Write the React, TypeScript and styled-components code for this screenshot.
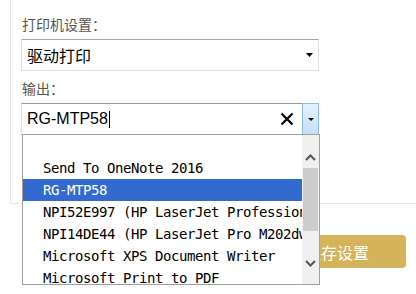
import React from 'react';
import styled, { createGlobalStyle } from 'styled-components';

const Global = createGlobalStyle`
  html, body { margin: 0; padding: 0; background: #fff; }
  body {
    width: 416px; height: 294px; overflow: hidden;
    font-family: "Noto Sans CJK SC", "Liberation Sans", sans-serif;
  }
`;

const Page = styled.div`
  display: flex;
  flex-direction: column;
  height: 294px;
`;

const Panel = styled.div`
  margin-left: 10px;
  height: 204px;
  box-sizing: border-box;
  border-left: 1px solid #e8e8e8;
  border-bottom: 1px solid #e8e8e8;
  padding: 14px 0 0 10px;
  display: flex;
  flex-direction: column;
`;

const Label = styled.div<{ $gap?: number }>`
  font-size: 14px;
  line-height: 20px;
  color: #555;
  padding-left: 1px;
  margin-top: ${(p) => p.$gap ?? 0}px;
  margin-bottom: 5px;
`;

const Select = styled.div`
  width: 298px;
  height: 32px;
  box-sizing: border-box;
  border: 1px solid #e0e0e0;
  border-top-color: #a8a8a8;
  display: flex;
  align-items: center;
  padding: 0 5px 0 5px;
  font-size: 16px;
  color: #000;
`;

const SelectText = styled.span`
  flex: 1;
`;

const Combo = styled.div`
  position: relative;
  width: 298px;
  height: 32px;
  box-sizing: border-box;
  border: 1px solid #e0e0e0;
  border-top-color: #9a9a9a;
  border-bottom-color: #9a9a9a;
  display: flex;
  align-items: center;
`;

const ComboText = styled.div`
  flex: 1;
  display: flex;
  align-items: center;
  padding-left: 5px;
  font-family: "Liberation Sans", Arial, sans-serif;
  font-size: 16px;
  color: #000;
`;

const Caret = styled.span`
  display: inline-block;
  width: 1px;
  height: 17px;
  background: #000;
  margin-left: 1px;
`;

const ClearIcon = styled.svg`
  width: 14px;
  height: 14px;
  margin-right: 8px;
`;

const DropBtn = styled.div`
  width: 17px;
  height: 32px;
  margin: -1px -1px -1px 0;
  box-sizing: border-box;
  border: 1px solid #8cbbe6;
  background: linear-gradient(#e6f2fc, #c3dff7);
  display: flex;
  align-items: center;
  justify-content: center;
`;

const Arrow = styled.svg`
  display: block;
`;

const List = styled.div`
  position: absolute;
  left: 0;
  top: 100%;
  width: 298px;
  height: 151px;
  box-sizing: border-box;
  border: 1px solid #a0a0a0;
  background: #fff;
  display: flex;
  z-index: 10;
`;

const Options = styled.div`
  flex: 1;
  overflow: hidden;
  display: flex;
  flex-direction: column;
`;

const Option = styled.div<{ $selected?: boolean }>`
  flex: none;
  height: 22px;
  line-height: 22px;
  padding-left: 20px;
  white-space: nowrap;
  font-family: "DejaVu Sans Mono", "Liberation Mono", monospace;
  font-size: 14px;
  letter-spacing: -0.43px;
  color: ${(p) => (p.$selected ? '#fff' : '#000')};
  background: ${(p) => (p.$selected ? '#336ad0' : 'transparent')};
`;

const Scrollbar = styled.div`
  width: 17px;
  background: #f0f0f0;
  display: flex;
  flex-direction: column;
`;

const ScrollBtn = styled.div<{ $up?: boolean }>`
  height: 33px;
  box-sizing: border-box;
  padding-top: ${(p) => (p.$up ? 11 : 0)}px;
  padding-bottom: ${(p) => (p.$up ? 0 : 8)}px;
  display: flex;
  align-items: center;
  justify-content: center;
`;

const Thumb = styled.div`
  height: 63px;
  margin: 0 1px;
  background: #cdcdcd;
`;

const Track = styled.div`
  flex: 1;
`;

const Footer = styled.div`
  display: flex;
  justify-content: flex-end;
  padding: 31px 10px 0 0;
`;

const SaveButton = styled.div`
  width: 138px;
  height: 33px;
  border-radius: 4px;
  background: #d5b35b;
  color: #fff;
  font-size: 16px;
  display: flex;
  align-items: center;
  justify-content: center;
`;

const options = [
  '',
  'Send To OneNote 2016',
  'RG-MTP58',
  'NPI52E997 (HP LaserJet Professional M1136 MFP)',
  'NPI14DE44 (HP LaserJet Pro M202dw)',
  'Microsoft XPS Document Writer',
  'Microsoft Print to PDF',
];

const Chevron = ({ up }: { up?: boolean }) => (
  <svg width="11" height="7" viewBox="0 0 11 7">
    <polyline
      points={up ? '1,6 5.5,1.5 10,6' : '1,1 5.5,5.5 10,1'}
      fill="none"
      stroke="#555"
      strokeWidth="2"
    />
  </svg>
);

export default function App() {
  return (
    <>
      <Global />
      <Page>
        <Panel>
          <Label>打印机设置：</Label>
          <Select>
            <SelectText>驱动打印</SelectText>
            <Arrow width="7" height="4" viewBox="0 0 7 4">
              <polygon points="0,0 7,0 3.5,4" fill="#000" />
            </Arrow>
          </Select>
          <Label $gap={7}>输出：</Label>
          <Combo>
            <ComboText>
              RG-MTP58
              <Caret />
            </ComboText>
            <ClearIcon viewBox="0 0 14 14">
              <path d="M1.5 1.5 L12.5 12.5 M12.5 1.5 L1.5 12.5" stroke="#000" strokeWidth="2.2" />
            </ClearIcon>
            <DropBtn>
              <Arrow width="6" height="3" viewBox="0 0 6 3">
                <polygon points="0,0 6,0 3,3" fill="#000" />
              </Arrow>
            </DropBtn>
            <List>
              <Options>
                {options.map((o, i) => (
                  <Option key={i} $selected={o === 'RG-MTP58'}>
                    {o}
                  </Option>
                ))}
              </Options>
              <Scrollbar>
                <ScrollBtn $up>
                  <Chevron up />
                </ScrollBtn>
                <Thumb />
                <Track />
                <ScrollBtn>
                  <Chevron />
                </ScrollBtn>
              </Scrollbar>
            </List>
          </Combo>
        </Panel>
        <Footer>
          <SaveButton>保存设置</SaveButton>
        </Footer>
      </Page>
    </>
  );
}
